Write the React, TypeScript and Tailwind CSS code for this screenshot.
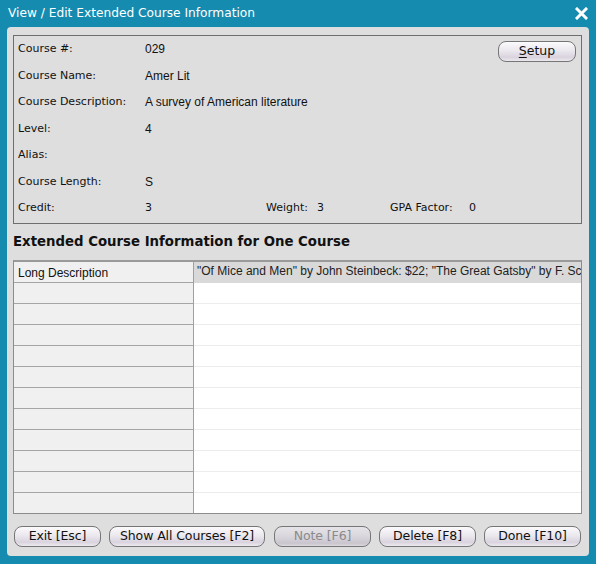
import React from "react";

const tah = { fontFamily: '"DejaVu Sans", Verdana, sans-serif' };
const ari = { fontFamily: '"Liberation Sans", Arial, sans-serif' };

function Btn({
  children,
  w,
  disabled,
}: {
  children: React.ReactNode;
  w: string;
  disabled?: boolean;
}) {
  return (
    <div
      className={`${w} h-[21px] shrink-0 rounded-[8px] border border-[#767676] flex items-center justify-center text-[12.5px] tracking-[-0.1px] ${
        disabled
          ? "text-[#8a8a8a] bg-[linear-gradient(#e6e4e8,#d6d2da_60%,#c9c4cd_85%,#dcd9de)]"
          : "text-[#111] bg-[linear-gradient(#fbfafc,#ebe8ee_45%,#d9d3de_80%,#ece9ee)]"
      }`}
      style={tah}
    >
      {children}
    </div>
  );
}

function Row({
  label,
  value,
  children,
}: {
  label: string;
  value?: string;
  children?: React.ReactNode;
}) {
  return (
    <div className="flex items-center h-[26.5px]">
      <div
        className="w-[127px] shrink-0 text-[11px] text-[#111]"
        style={tah}
      >
        {label}
      </div>
      <div className="text-[12px] text-[#111]" style={ari}>
        {value}
      </div>
      {children}
    </div>
  );
}

export default function App() {
  const rows = Array.from({ length: 11 });
  return (
    <div className="w-[596px] h-[564px] bg-[#168bb0] flex flex-col">
      <div className="h-[27px] flex items-center justify-between pl-[8px] pr-[8px]">
        <div className="text-white text-[12.2px]" style={tah}>
          View / Edit Extended Course Information
        </div>
        <svg width="13" height="13" viewBox="0 0 13 13">
          <path
            d="M2 2 L11 11 M11 2 L2 11"
            stroke="white"
            strokeWidth="3"
            strokeLinecap="square"
          />
        </svg>
      </div>
      <div className="mx-[7px] mb-[8px] flex-1 bg-[#dedede] rounded-[4px] flex flex-col pl-[6px] pr-[7px] pt-[8px]">
        <div className="h-[189px] border border-[#6e6e6e] pl-[4px] flex flex-col">
          <div className="flex items-center h-[26.5px]">
            <div
              className="w-[127px] shrink-0 text-[11px] text-[#111]"
              style={tah}
            >
              Course #:
            </div>
            <div className="text-[12px] text-[#111]" style={ari}>
              029
            </div>
            <div className="ml-auto mr-[5px] mt-[5px]">
              <div
                className="w-[78px] h-[21px] rounded-[8px] border border-[#767676] flex items-center justify-center text-[12.5px] text-[#111] bg-[linear-gradient(#fbfafc,#ebe8ee_45%,#d9d3de_80%,#ece9ee)]"
                style={tah}
              >
                <span className="underline underline-offset-2">S</span>etup
              </div>
            </div>
          </div>
          <Row label="Course Name:" value="Amer Lit" />
          <Row label="Course Description:" value="A survey of American literature" />
          <Row label="Level:" value="4" />
          <Row label="Alias:" value="" />
          <Row label="Course Length:" value="S" />
          <div className="flex items-center h-[26.5px] text-[11px] text-[#111]" style={tah}>
            <div className="w-[127px] shrink-0">Credit:</div>
            <div className="w-[121px] shrink-0">3</div>
            <div className="w-[51px] shrink-0">Weight:</div>
            <div className="w-[73px] shrink-0">3</div>
            <div className="w-[79px] shrink-0">GPA Factor:</div>
            <div>0</div>
          </div>
        </div>
        <div
          className="h-[36px] flex items-center font-bold text-[13.3px] text-[#111]"
          style={tah}
        >
          Extended Course Information for One Course
        </div>
        <div className="h-[254px] border border-[#8c8c8c] border-t-2 border-t-[#9a9a9a] flex bg-white overflow-hidden">
          <div className="w-[180px] shrink-0 border-r border-[#a0a0a0] flex flex-col">
            <div
              className="h-[21px] shrink-0 bg-[#f0f0f0] border-b border-[#a5a5a5] flex items-center pl-[4px] pt-[1px] text-[12px] text-[#111]"
              style={ari}
            >
              Long Description
            </div>
            {rows.map((_, i) => (
              <div
                key={i}
                className="h-[21px] shrink-0 bg-[#f0f0f0] border-b border-[#a5a5a5]"
              />
            ))}
          </div>
          <div className="flex-1 min-w-0 flex flex-col">
            <div
              className="h-[21px] shrink-0 bg-[#d9d9d9] flex items-center pl-[3px] pb-[3px] text-[12px] text-[#222] whitespace-nowrap overflow-hidden"
              style={ari}
            >
              "Of Mice and Men" by John Steinbeck: $22; "The Great Gatsby" by F. Scott Fitzgerald
            </div>
            {rows.map((_, i) => (
              <div
                key={i}
                className="h-[21px] shrink-0 border-b border-[#ececec]"
              />
            ))}
          </div>
        </div>
        <div className="flex items-center mt-[12px] pl-[1px]">
          <Btn w="w-[87px]">Exit [Esc]</Btn>
          <div className="w-[8px] shrink-0" />
          <Btn w="w-[156px]">Show All Courses [F2]</Btn>
          <div className="w-[9px] shrink-0" />
          <Btn w="w-[97px]" disabled>
            Note [F6]
          </Btn>
          <div className="w-[8px] shrink-0" />
          <Btn w="w-[97px]">Delete [F8]</Btn>
          <div className="w-[8px] shrink-0" />
          <Btn w="w-[97px]">Done [F10]</Btn>
        </div>
      </div>
    </div>
  );
}
